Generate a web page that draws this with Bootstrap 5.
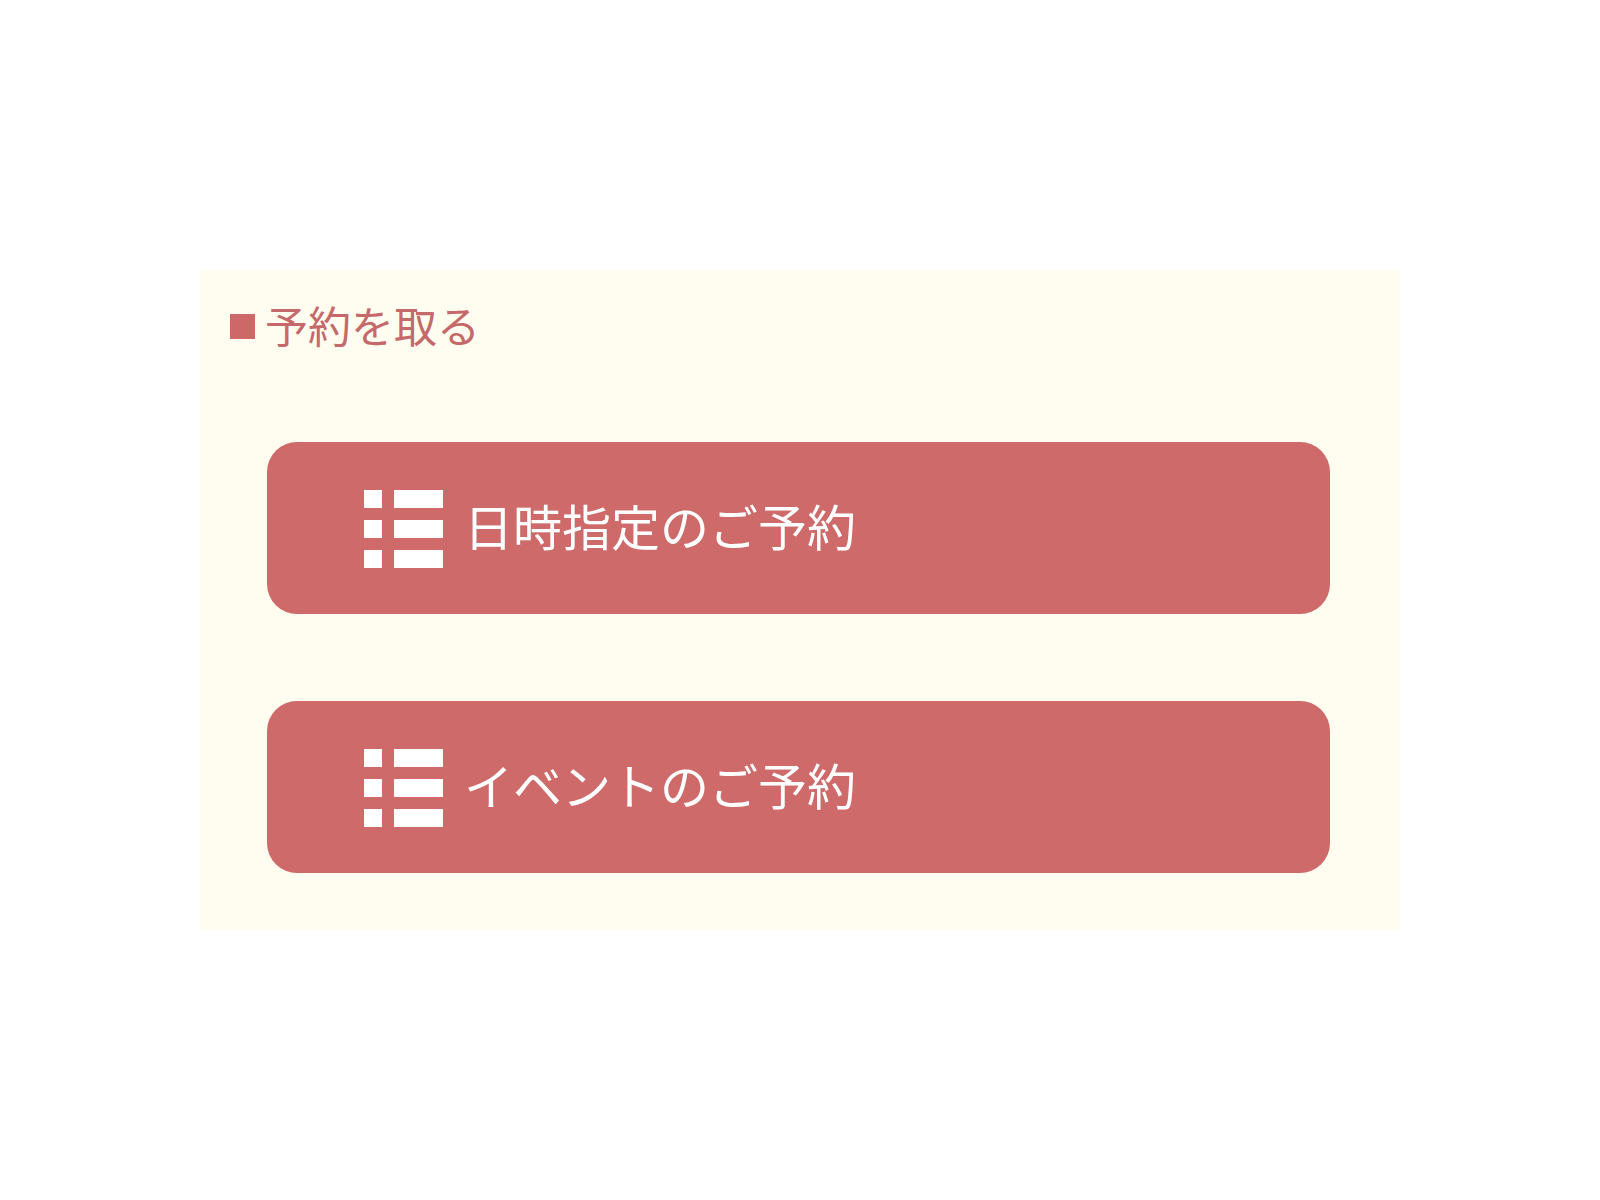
<!DOCTYPE html>
<html lang="ja">
<head>
<meta charset="utf-8">
<meta name="viewport" content="width=device-width, initial-scale=1">
<title>予約を取る</title>
<link href="https://cdn.jsdelivr.net/npm/bootstrap@5.3.0/dist/css/bootstrap.min.css" rel="stylesheet">
<style>
  body { background: #fff; font-family: "Noto Sans CJK JP", sans-serif; }
  .booking-panel { width: 75%; background: #fffdf0; padding: 24px 70px 57px 30px; }
  .booking-title { color: #c5696a; font-size: 43px; line-height: 60px; font-weight: 400; gap: 10px; margin-bottom: 84px; }
  .title-text { padding-bottom: 4px; }
  .title-square { width: 25px; height: 25px; background: #cd6869; }
  .booking-list { gap: 87px; padding-left: 37px; }
  .booking-btn, .booking-btn:hover { background: #ce6a6a; color: #fff; }
  .booking-btn { border: 0; border-radius: 30px; padding: 45px 97px 43px; gap: 21px; font-size: 49px; line-height: 76px; font-weight: 400; }
  .booking-btn:hover { background: #bd5b5b; }
  .list-icon { width: 79px; height: 78px; }
</style>
</head>
<body class="d-flex align-items-center justify-content-center min-vh-100">
<main class="booking-panel">
  <h1 class="booking-title d-flex align-items-center"><span class="title-square flex-shrink-0"></span><span class="title-text">予約を取る</span></h1>
  <div class="booking-list d-flex flex-column">
    <button type="button" class="booking-btn btn d-flex align-items-center text-start">
      <svg class="list-icon flex-shrink-0" viewBox="0 0 79 78" fill="#fff" aria-hidden="true"><path d="M0 0h18v18H0zM30 0h49v18H30zM0 30h18v18H0zM30 30h49v18H30zM0 60h18v18H0zM30 60h49v18H30z"/></svg>
      <span class="pb-2">日時指定のご予約</span>
    </button>
    <button type="button" class="booking-btn btn d-flex align-items-center text-start">
      <svg class="list-icon flex-shrink-0" viewBox="0 0 79 78" fill="#fff" aria-hidden="true"><path d="M0 0h18v18H0zM30 0h49v18H30zM0 30h18v18H0zM30 30h49v18H30zM0 60h18v18H0zM30 60h49v18H30z"/></svg>
      <span class="pb-2">イベントのご予約</span>
    </button>
  </div>
</main>
<script src="https://cdn.jsdelivr.net/npm/bootstrap@5.3.0/dist/js/bootstrap.bundle.min.js"></script>
</body>
</html>
